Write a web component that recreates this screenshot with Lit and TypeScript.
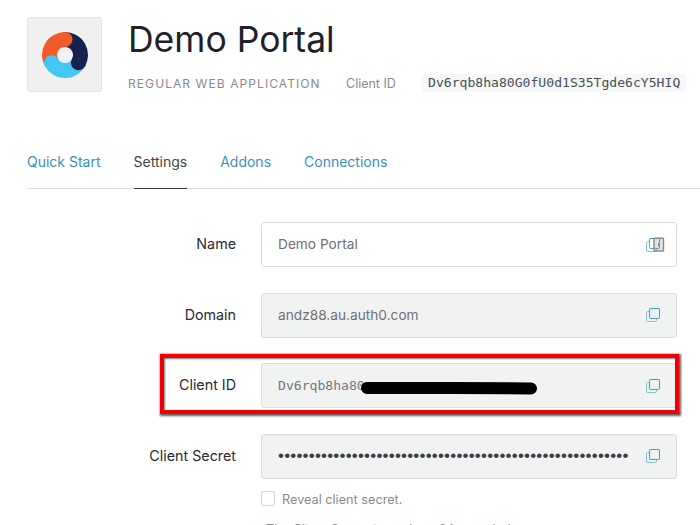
import { LitElement, html, css, svg } from "lit";
import { customElement } from "lit/decorators.js";

const copyIcon = (overlay = false) => html`<svg class="copy" width="14" height="14" viewBox="0 0 14 14" fill="none">
  <path d="M3 3.600H1.300a.8.800 0 0 0-.8.800v8.300a.8.800 0 0 0 .8.800h8.300a.8.800 0 0 0 .8-.8v-1.700" stroke="#82c0d8" stroke-width="1"/>
  <rect x="3.600" y=".5" width="9.900" height="9.900" rx=".6" stroke="#3f9cc4" stroke-width="1"/>
  ${overlay ? svg`<rect x="8" y=".2" width="9.500" height="12.800" rx=".8" fill="#9a9a9a" fill-opacity=".28" stroke="#888" stroke-width="1.400"/><rect x="12" y="5" width="1.800" height="3.400" fill="#8a8a8a"/>` : ""}
</svg>`;

@customElement("app-root")
export class AppRoot extends LitElement {
  static styles = css`
    :host { display: block; width: 700px; height: 525px; overflow: hidden; position: relative; background: #fff; font-family: "Inter", "Liberation Sans", sans-serif; color: #222228; }
    .head { display: flex; padding: 17px 0 0 27px; gap: 26px; }
    .logo { width: 75px; height: 75px; box-sizing: border-box; background: #f0f0f0; border: 1px solid #e4e4e4; border-radius: 3px; display: flex; align-items: center; justify-content: center; }
    h1 { margin: 0; font-size: 35.5px; line-height: 46px; font-weight: 400; color: #1e212a; }
    .meta { display: flex; align-items: center; margin-top: 11px; font-size: 12px; color: #8a8a8e; }
    .type { letter-spacing: 1.08px; width: 218px; white-space: nowrap; }
    .cid { width: 76px; font-size: 12.500px; white-space: nowrap; }
    code { font-family: "DejaVu Sans Mono", "Liberation Mono", monospace; font-size: 13.100px; line-height: 18px; background: #f5f7f8; border-radius: 3px; padding: 0 6px; color: #4a4f55; white-space: nowrap; }
    .tabs { display: flex; margin: 48px 0 0 27px; gap: 33px; height: 48px; border-bottom: 1px solid #dedede; font-size: 14px; }
    .tab { color: #3b8fb9; line-height: 44px; height: 48px; box-sizing: border-box; white-space: nowrap; }
    .tab.on { color: #444; border-bottom: 1px solid #333; height: 49px; }
    .form { display: flex; flex-direction: column; gap: 25.670px; margin-top: 33px; }
    .row { display: flex; align-items: center; gap: 25px; }
    label { width: 236px; padding-bottom: 2px; text-align: right; font-size: 14.300px; font-weight: 430; color: #2a2a30; white-space: nowrap; }
    .input { width: 416px; height: 45px; box-sizing: border-box; border: 1px solid #dcdcdc; border-radius: 3px; display: flex; align-items: center; justify-content: space-between; padding: 0 16px 0 16px; font-size: 13.700px; color: #6f6f73; background: #fff; }
    .input > span { padding-bottom: 1px; }
    .input.ro { background: #f1f3f3; }
    .copy { overflow: visible; flex: none; }
    .mono { font-family: "DejaVu Sans Mono", "Liberation Mono", monospace; font-size: 13.100px; color: #77777b; }
    .dots { font-family: "Liberation Sans", sans-serif; font-size: 17px; letter-spacing: .2px; color: #3c3c44; white-space: nowrap; }
    .reveal { display: flex; align-items: center; gap: 7px; margin: 12px 0 0 261px; font-size: 12.700px; color: #8a8a8e; }
    .reveal span:last-child { padding-top: 1px; }
    .box { width: 14px; height: 15px; box-sizing: border-box; border: 1px solid #d4d4d4; border-radius: 2px; background: #fff; }
    .cut { margin: 15px 0 0 266px; font-size: 12.700px; color: #8a8a8e; white-space: nowrap; }
    .mark { position: absolute; left: 160px; top: 354px; width: 519px; height: 60px; box-sizing: border-box; border: 4px solid #f00000; box-shadow: 1px 1px 2px 1px rgba(40,40,40,.75), inset 1px 1px 2px rgba(40,40,40,.6); }
    .scribble { position: absolute; left: 360px; top: 381px; }
  `;

  render() {
    return html`
      <div class="head">
        <div class="logo">
          <svg width="46" height="46" viewBox="0 0 46 46" fill="none" stroke-width="15">
            <path d="M9.580 30.750A15.500 15.500 0 0 1 23 7.500" stroke="#f15a29"/>
            <path d="M23 7.500A15.500 15.500 0 0 1 36.420 30.750" stroke="#16214f"/>
            <path d="M36.420 30.750A15.500 15.500 0 0 1 9.580 30.750" stroke="#44c7f4"/>
            <circle cx="23" cy="7.500" r="7.500" fill="#f15a29"/>
            <circle cx="36.420" cy="30.750" r="7.500" fill="#16214f"/>
            <circle cx="9.580" cy="30.750" r="7.500" fill="#44c7f4"/>
          </svg>
        </div>
        <div>
          <h1>Demo Portal</h1>
          <div class="meta">
            <span class="type">REGULAR WEB APPLICATION</span>
            <span class="cid">Client ID</span>
            <code>Dv6rqb8ha80G0fU0d1S35Tgde6cY5HIQ</code>
          </div>
        </div>
      </div>
      <div class="tabs">
        <span class="tab">Quick Start</span>
        <span class="tab on">Settings</span>
        <span class="tab">Addons</span>
        <span class="tab">Connections</span>
      </div>
      <div class="form">
        <div class="row"><label>Name</label><div class="input"><span>Demo Portal</span>${copyIcon(true)}</div></div>
        <div class="row"><label>Domain</label><div class="input ro"><span>andz88.au.auth0.com</span>${copyIcon()}</div></div>
        <div class="row"><label>Client ID</label><div class="input ro"><span class="mono">Dv6rqb8ha80</span>${copyIcon()}</div></div>
        <div class="row"><label>Client Secret</label><div class="input ro"><span class="dots">${"•".repeat(57)}</span>${copyIcon()}</div></div>
      </div>
      <div class="reveal"><span class="box"></span><span>Reveal client secret.</span></div>
      <div class="cut">The Client Secret is not base64 encoded.</div>
      <div class="mark"></div>
      <svg class="scribble" width="180" height="16" viewBox="0 0 180 16"><path d="M7 7H90L171 7.500" stroke="#000" stroke-width="12" stroke-linecap="round"/></svg>
    `;
  }
}
